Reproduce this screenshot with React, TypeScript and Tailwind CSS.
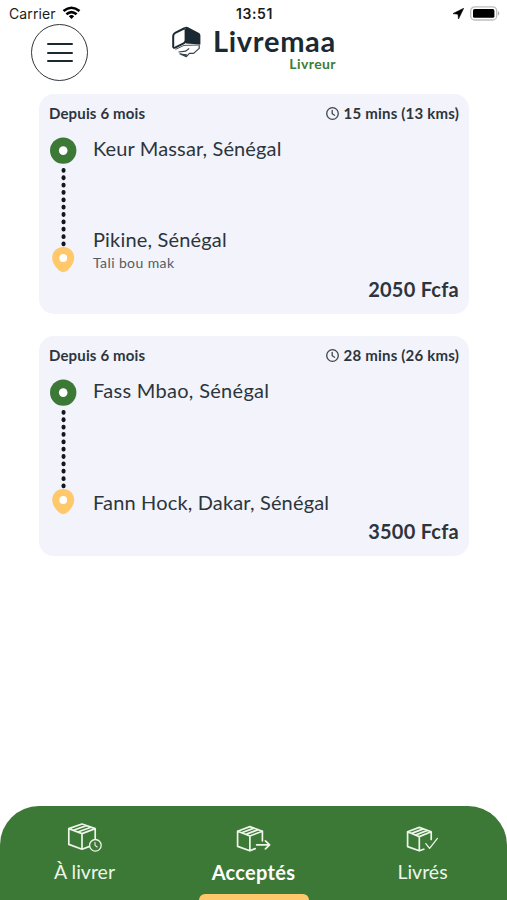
import React from "react";

type Delivery = {
  age: string;
  trip: string;
  from: string;
  to: string;
  note?: string;
  price: string;
  fromSpacing: string;
  toSpacing: string;
};

const deliveries: Delivery[] = [
  {
    age: "Depuis 6 mois",
    trip: "15 mins (13 kms)",
    from: "Keur Massar, Sénégal",
    to: "Pikine, Sénégal",
    note: "Tali bou mak",
    price: "2050 Fcfa",
    fromSpacing: "tracking-[0.13px]",
    toSpacing: "tracking-[0.17px]",
  },
  {
    age: "Depuis 6 mois",
    trip: "28 mins (26 kms)",
    from: "Fass Mbao, Sénégal",
    to: "Fann Hock, Dakar, Sénégal",
    price: "3500 Fcfa",
    fromSpacing: "tracking-[0.3px]",
    toSpacing: "tracking-[0.16px]",
  },
];

function StatusBar() {
  return (
    <div className="grid h-[26px] grid-cols-3 items-center pl-[9px] pr-[7px] font-['Inter',sans-serif] text-[14px] leading-none text-[#1c1c1c]">
      <div className="flex items-center gap-[6px]">
        <span className="pt-px tracking-[0.1px]">Carrier</span>
        <svg width="19" height="14" viewBox="0 0 18 14" fill="none" stroke="#000" strokeWidth="2.6">
          <path d="M1 5.1Q9-1.6 17 5.1" />
          <path d="M3.9 8.2Q9 3.9 14.1 8.2" />
          <path d="M6.3 10.2Q9 8 11.7 10.2L9 13Z" fill="#000" stroke="none" />
        </svg>
      </div>
      <span className="pt-px text-center text-[14px] font-semibold tracking-[0.6px]">13:51</span>
      <div className="flex items-center justify-end gap-[6px]">
        <svg width="11" height="11" viewBox="0 0 11 11">
          <path d="M10.7.3 0 5.6l5 .6.5 4.8z" fill="#000" stroke="#000" strokeWidth=".6" strokeLinejoin="round" />
        </svg>
        <svg width="30" height="15" viewBox="0 0 30 15">
          <rect x=".7" y=".8" width="26" height="13.2" rx="4" fill="#fff" stroke="#bdbdbd" strokeWidth="1.3" />
          <rect x="3" y="3.1" width="21.4" height="8.7" rx="1.6" fill="#000" />
          <path d="M28 5.2q2.6 2.2 0 4.4z" fill="#aaa" />
        </svg>
      </div>
    </div>
  );
}

function Logo() {
  return (
    <svg width="30" height="33" viewBox="0 0 30 33">
      <path d="M14 1Q15.3.5 16.6 1.1L28 7Q29.4 7.7 29.4 9.4V18.4L15 17.6Z" fill="#1b2932" />
      <path
        d="M14 2 4.2 6.8Q2.2 7.8 2.2 10V20.6Q2.2 22.4 4 21.6L12.6 17.4Q14.6 16.4 14.6 14.2V2.4"
        fill="#fff"
        stroke="#1b2932"
        strokeWidth="2"
        strokeLinejoin="round"
      />
      <path d="M4.5 23.4 13 19.4 29 19" fill="none" stroke="#1b2932" strokeWidth=".8" />
      <path
        d="M7.5 26 14.6 25.2 18.2 22.4M8.6 27.6 15.4 30.6 18.4 27.4H22.6L28.2 22.4V19.4"
        fill="none"
        stroke="#34424a"
        strokeWidth="1.2"
        strokeLinejoin="round"
      />
      <path d="M9 27.6 16 28.2 15.4 30.8Z" fill="#34424a" />
    </svg>
  );
}

function Header() {
  return (
    <header className="flex h-[68px] items-start pl-[31px]">
      <button className="-mt-[2px] flex size-[57px] shrink-0 flex-col items-center justify-center gap-[6.5px] rounded-full border border-[#30373b]" aria-label="Menu">
        <span className="h-[2px] w-[26px] rounded-full bg-[#1b2932]" />
        <span className="h-[2px] w-[26px] rounded-full bg-[#1b2932]" />
        <span className="h-[2px] w-[26px] rounded-full bg-[#1b2932]" />
      </button>
      <div className="ml-[83px] flex">
        <Logo />
        <div className="ml-[12px] flex w-[123px] flex-col">
          <span className="h-[30px] whitespace-nowrap text-[29px] font-bold leading-[30px] tracking-[0.7px] text-[#1b2932]">Livremaa</span>
          <span className="self-end text-[14px] font-bold leading-[15px] tracking-[0.4px] text-[#3b7d35]">Livreur</span>
        </div>
      </div>
    </header>
  );
}

function Clock() {
  return (
    <svg width="13" height="13" viewBox="0 0 13 13" fill="none" stroke="#3d454c" strokeWidth="1.3" strokeLinecap="round">
      <circle cx="6.5" cy="6.5" r="5.8" />
      <path d="M6.2 3.3v3.4l2.4 1.5" />
    </svg>
  );
}

function RouteTrack() {
  return (
    <svg className="shrink-0" width="28" height="136" viewBox="0 0 28 136">
      <circle cx="14.2" cy="13.6" r="13.2" fill="#3c7836" />
      <circle cx="14.2" cy="13.6" r="4.3" fill="#fff" />
      {Array.from({ length: 11 }, (_, i) => (
        <rect key={i} x="12.6" y={31 + i * 7.35} width="3.9" height="4.8" rx="1.8" fill="#11171b" />
      ))}
      <path d="M14.2 110C20.4 110 25.2 114.6 25.2 120.8C25.2 126 21.5 130.8 17.6 134Q14.2 136.3 10.8 134C6.9 130.8 3.2 126 3.2 120.8C3.2 114.6 8 110 14.2 110Z" fill="#ffc86b" />
      <circle cx="14.2" cy="121" r="3.9" fill="#fff" />
    </svg>
  );
}

function DeliveryCard({ item }: { item: Delivery }) {
  return (
    <article className="flex h-[219.5px] flex-col rounded-[15px] bg-[#f2f3fb] px-[10px] pt-[9px] text-[#2d353c]">
      <div className="flex h-5 items-center justify-between text-[15px] font-bold">
        <span className="tracking-[0.15px]">{item.age}</span>
        <span className="flex items-center gap-[5px] tracking-[0.2px]">
          <Clock />
          {item.trip}
        </span>
      </div>
      <div className="mt-[13px] flex h-[137px] gap-[16px]">
        <div className="shrink-0 pt-px">
          <RouteTrack />
        </div>
        <div className="flex flex-col justify-between pb-px text-[20px] leading-6">
          <span className={item.fromSpacing}>{item.from}</span>
          <div className="flex flex-col">
            <span className={item.toSpacing}>{item.to}</span>
            {item.note && <span className="-mb-[3px] text-[14px] leading-6 tracking-[0.4px] text-[#545b62]">{item.note}</span>}
          </div>
        </div>
      </div>
      <span className="mt-[4px] self-end text-[20px] font-bold leading-6 tracking-[0.25px]">{item.price}</span>
    </article>
  );
}

function BoxIcon({ kind }: { kind: "clock" | "arrow" | "check" }) {
  return (
    <svg className="shrink-0" width="36" height="31" viewBox="0 0 36 31" fill="none" stroke="#edf5e9" strokeWidth="1.7" strokeLinejoin="round" strokeLinecap="round">
      {kind === "clock" && (
        <>
          <path d="M22 25.6 15 28.2 1.8 23.4V7.6L15 3 28.2 7.6V17.4M1.8 7.6 15 12.6 28.2 7.6M15 12.6V28.2M6.3 9.3 19.4 4.6M10.8 11 24 6.2" />
          <circle cx="28.4" cy="24.3" r="5.8" strokeWidth="1.3" />
          <path d="M28 21.4v3l2.2 1.6" strokeWidth="1.1" />
        </>
      )}
      {kind === "arrow" && (
        <>
          <path d="M19.2 27.6 13.9 29.8 1.6 25.4V10.2L13.9 5.6 26.4 10.2V19.8M1.6 10.2 13.9 15 26.4 10.2M13.9 15V29.8M5.7 11.8 18 7.1M9.8 13.4 22.2 8.7" />
          <path d="M20.6 23.8H33.4M29.4 19.8l4.2 4-4.2 4" />
        </>
      )}
      {kind === "check" && (
        <>
          <path d="M18.8 28.2 14.3 29.8 2.6 25.6V10.8L14.3 6.4 26.2 10.8V18.4M2.6 10.8 14.3 15.6 26.2 10.8M14.3 15.6V29.8M6.6 12.4 18.4 7.9M10.6 14 22.4 9.4" />
          <path d="M20.8 22.6 24.6 27.4 32.4 17.4" strokeWidth="1.3" />
        </>
      )}
    </svg>
  );
}

function BottomNav() {
  return (
    <nav className="grid h-[94px] grid-cols-3 rounded-t-[39px] bg-[#3c7836] pt-[15px] text-[19.5px] leading-6 text-[#edf5e9]">
      <div className="flex flex-col items-center">
        <BoxIcon kind="clock" />
        <span className="mt-[8px]">À livrer</span>
      </div>
      <div className="flex flex-col items-center">
        <BoxIcon kind="arrow" />
        <span className="mt-[8px] text-[20px] font-bold tracking-[0.3px] text-white">Acceptés</span>
        <span className="mt-auto h-[6px] w-[110px] rounded-t-[6px] bg-[#ffc86b]" />
      </div>
      <div className="flex flex-col items-center">
        <BoxIcon kind="check" />
        <span className="mt-[8px]">Livrés</span>
      </div>
    </nav>
  );
}

export default function App() {
  return (
    <div className="flex h-[900px] w-[507px] flex-col overflow-hidden bg-white font-['Lato',sans-serif]">
      <StatusBar />
      <Header />
      <main className="flex flex-1 flex-col gap-[22.5px] pl-[39px] pr-[38px]">
        {deliveries.map((item) => (
          <DeliveryCard key={item.from} item={item} />
        ))}
      </main>
      <BottomNav />
    </div>
  );
}
